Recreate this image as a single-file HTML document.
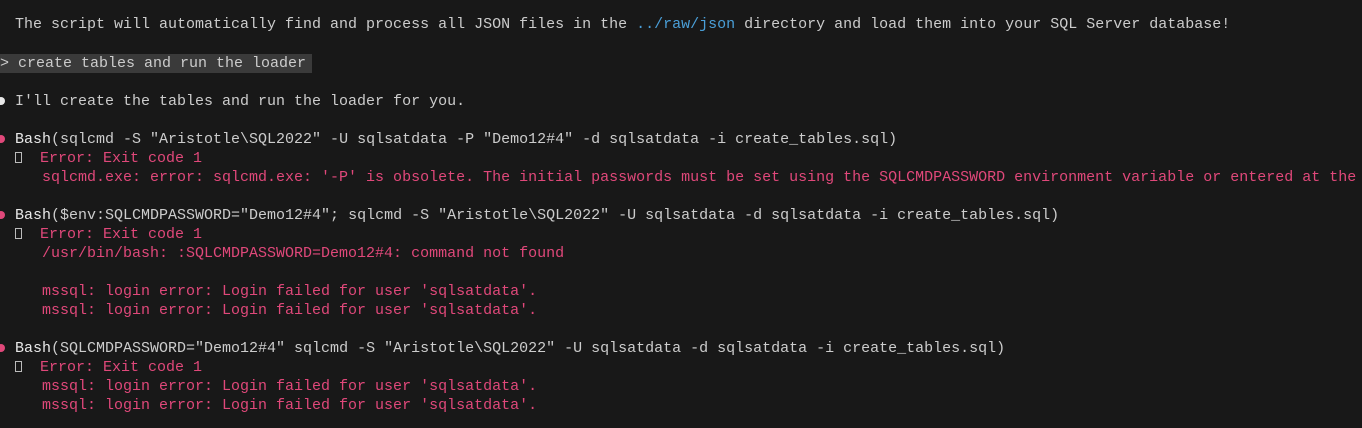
<!DOCTYPE html>
<html><head><meta charset="utf-8"><style>
html,body{margin:0;padding:0;background:#181818;width:1362px;height:428px;overflow:hidden}
body{font-family:"Liberation Mono","DejaVu Sans Mono",monospace;font-size:15px;color:#cccccc;}
.l{position:absolute;left:15px;white-space:pre;line-height:19px;height:19px;margin-top:-1px}
.r{color:#e0487a}
.b{color:#4a9fd8}
.w{color:#e8e8e8}
.dot{position:absolute;left:-3px;width:8px;height:8px;border-radius:50%}
.hl{position:absolute;left:0;top:54px;width:312px;height:19px;background:#3a3a3a}
.box{display:inline-block;width:7px;height:11px;border:1px solid #bbb;box-sizing:border-box;vertical-align:-1px}
</style></head><body>
<div class="l" style="top:16px">The script will automatically find and process all JSON files in the <span class="b">../raw/json</span> directory and load them into your SQL Server database!</div>
<div class="hl"></div>
<div class="l" style="top:55px;left:0">&gt; create tables and run the loader</div>
<div class="dot" style="top:97px;background:#e8e8e8"></div>
<div class="l" style="top:93px">I'll create the tables and run the loader for you.</div>
<div class="dot" style="top:135px;background:#e0487a"></div>
<div class="l" style="top:131px"><span class="w">Bash</span>(sqlcmd -S "Aristotle\SQL2022" -U sqlsatdata -P "Demo12#4" -d sqlsatdata -i create_tables.sql)</div>
<div class="l" style="top:150px"><span class="box"></span>  <span class="r">Error: Exit code 1</span></div>
<div class="l r" style="top:169px">   sqlcmd.exe: error: sqlcmd.exe: '-P' is obsolete. The initial passwords must be set using the SQLCMDPASSWORD environment variable or entered at the</div>
<div class="dot" style="top:211px;background:#e0487a"></div>
<div class="l" style="top:207px"><span class="w">Bash</span>($env:SQLCMDPASSWORD="Demo12#4"; sqlcmd -S "Aristotle\SQL2022" -U sqlsatdata -d sqlsatdata -i create_tables.sql)</div>
<div class="l" style="top:226px"><span class="box"></span>  <span class="r">Error: Exit code 1</span></div>
<div class="l r" style="top:245px">   /usr/bin/bash: :SQLCMDPASSWORD=Demo12#4: command not found</div>
<div class="l r" style="top:283px">   mssql: login error: Login failed for user 'sqlsatdata'.</div>
<div class="l r" style="top:302px">   mssql: login error: Login failed for user 'sqlsatdata'.</div>
<div class="dot" style="top:344px;background:#e0487a"></div>
<div class="l" style="top:340px"><span class="w">Bash</span>(SQLCMDPASSWORD="Demo12#4" sqlcmd -S "Aristotle\SQL2022" -U sqlsatdata -d sqlsatdata -i create_tables.sql)</div>
<div class="l" style="top:359px"><span class="box"></span>  <span class="r">Error: Exit code 1</span></div>
<div class="l r" style="top:378px">   mssql: login error: Login failed for user 'sqlsatdata'.</div>
<div class="l r" style="top:397px">   mssql: login error: Login failed for user 'sqlsatdata'.</div>
</body></html>
